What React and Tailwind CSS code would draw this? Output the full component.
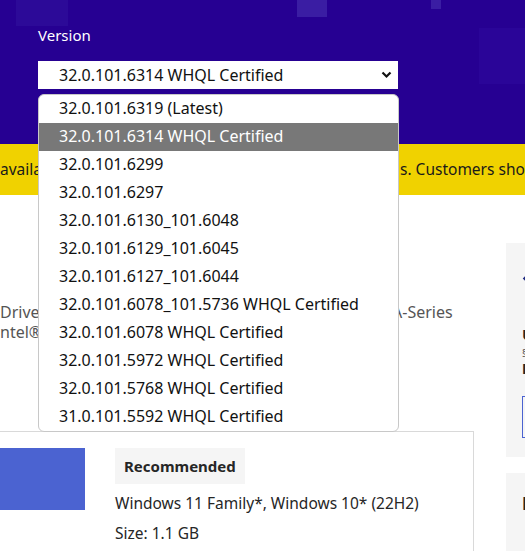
import { useState } from "react";

const versions = [
  "32.0.101.6319 (Latest)",
  "32.0.101.6314 WHQL Certified",
  "32.0.101.6299",
  "32.0.101.6297",
  "32.0.101.6130_101.6048",
  "32.0.101.6129_101.6045",
  "32.0.101.6127_101.6044",
  "32.0.101.6078_101.5736 WHQL Certified",
  "32.0.101.6078 WHQL Certified",
  "32.0.101.5972 WHQL Certified",
  "32.0.101.5768 WHQL Certified",
  "31.0.101.5592 WHQL Certified",
];

function Chevron() {
  return (
    <svg width="11" height="8" viewBox="0 0 11 8" className="shrink-0">
      <path d="M1.5 1.5 L5.5 5.5 L9.5 1.5" fill="none" stroke="#111" strokeWidth="2.2" />
    </svg>
  );
}

export default function App() {
  const [selected, setSelected] = useState(versions[1]);

  return (
    <div
      className="relative w-[525px] h-[551px] overflow-hidden bg-white text-[#262626]"
      style={{ fontFamily: '"Noto Sans", "Open Sans", sans-serif' }}
    >
      {/* ── Header ───────────────────────── */}
      <header className="relative h-[144px] bg-[#260092] overflow-hidden">
        <div className="absolute left-[16px] top-0 w-[52px] h-[26px] bg-[#2c0a98]" />
        <div className="absolute left-[297px] top-0 w-[30px] h-[17px] bg-[#3a1da3]" />
        <div className="absolute left-[431px] top-0 w-[10px] h-[9px] bg-[#3a1da3]" />
        <div className="absolute left-[479px] top-[28px] w-[50px] h-[56px] bg-[#2a0598]" />

        <div className="relative pl-[38px] pt-[23px]">
          <div className="text-white text-[15px] leading-[24px]">Version</div>
          <div className="mt-[14px] w-[360px] h-[28px] bg-white flex items-center pl-[21px] pr-[6px]">
            <span className="flex-1 text-[16px] text-[#111]">{selected}</span>
            <Chevron />
          </div>
        </div>
      </header>

      {/* ── Notice bar ───────────────────── */}
      <div className="h-[51px] bg-[#f0d200] flex items-center text-[15.5px] text-[#1a1a1a] whitespace-nowrap">
        <span className="w-[400px] shrink-0 overflow-hidden">available for Intel® Arc™ A-Series Graphic</span>
        <span>s. Customers should update</span>
      </div>

      {/* ── Body ─────────────────────────── */}
      <div className="flex">
        <div className="w-[474px] shrink-0">
          <div className="pt-[107px] h-[236px] text-[16px] leading-[20px] text-[#555] whitespace-nowrap">
            <div className="flex">
              <span className="w-[392px] shrink-0 overflow-hidden">Driver for Intel® Arc™ Graphics and Intel® Arc</span>
              <span>A-Series</span>
            </div>
            <div>ntel® Iris® Xe Graphics</div>
          </div>

          <div className="border border-l-0 border-[#d9d9d9] h-[140px] flex gap-[30px] pt-[16px]">
            <div className="w-[85px] h-[62px] bg-[#4b63d1]" />
            <div className="flex flex-col">
              <div className="self-start bg-[#f5f5f5] px-[9px] h-[36px] flex items-center text-[15px] font-bold text-[#262626]">
                Recommended
              </div>
              <div className="mt-[8px] text-[15.5px] leading-[22px] text-[#262626]">
                Windows 11 Family*, Windows 10* (22H2)
              </div>
              <div className="mt-[8px] text-[15.5px] leading-[22px] text-[#262626]">Size: 1.1 GB</div>
            </div>
          </div>
        </div>

        <div className="ml-[32px] shrink-0 w-[260px] pt-[48px]">
          <div className="bg-[#f5f5f5] h-[214px] pl-[16px] pt-[30px]">
            <div className="ml-[3px] w-[11px] h-[11px] bg-[#1f2a80] rotate-45" />
            <div className="mt-[40px] text-[15px] font-bold leading-[20px] text-[#262626]">Unified</div>
            <div className="mt-[2px] text-[11px] leading-[14px] text-[#555]">§ Filename</div>
            <div className="text-[14px] font-bold leading-[18px] text-[#262626]">Download</div>
            <div className="mt-[18px] w-[200px] h-[42px] border border-[#4b63d1]" />
          </div>
          <div className="mt-[16px] bg-[#f5f5f5] h-[100px] pl-[16px] pt-[20px]">
            <div className="text-[17px] font-bold leading-[22px] text-[#262626]">Details</div>
            <div className="mt-[36px] w-[120px] h-[20px] bg-[#4b63d1]" />
          </div>
        </div>
      </div>

      {/* ── Open dropdown (overlay) ──────── */}
      <ul className="absolute left-[38px] top-[94px] w-[361px] bg-white border border-[#c8c8c8] rounded-[6px] overflow-hidden">
        {versions.map((v) => (
          <li
            key={v}
            onClick={() => setSelected(v)}
            className={`h-[28px] flex items-center pl-[20px] pb-[3px] text-[16px] whitespace-nowrap ${
              v === selected ? "bg-[#787878] text-white" : "text-[#111]"
            }`}
          >
            {v}
          </li>
        ))}
      </ul>
    </div>
  );
}
